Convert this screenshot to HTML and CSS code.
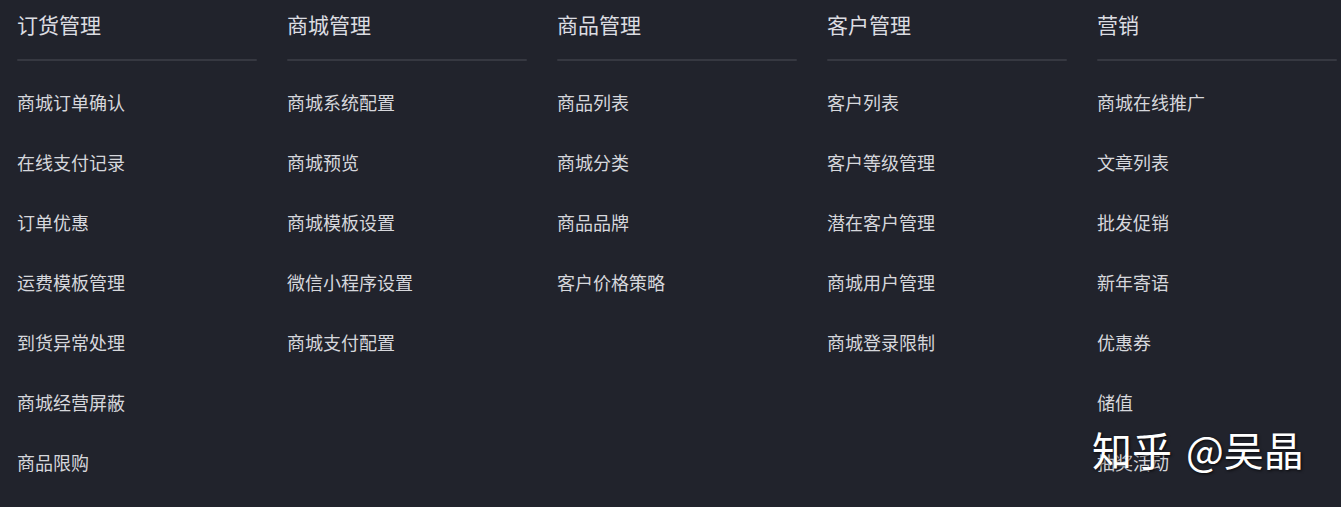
FILE: index.html
```html
<!DOCTYPE html>
<html lang="zh-CN">
<head>
<meta charset="utf-8">
<link rel="stylesheet" href="styles.css">
</head>
<body>
<div class="menu">
  <div class="col">
    <div class="title">订货管理</div>
    <div class="rule"></div>
    <ul class="items">
      <li>商城订单确认</li>
      <li>在线支付记录</li>
      <li>订单优惠</li>
      <li>运费模板管理</li>
      <li>到货异常处理</li>
      <li>商城经营屏蔽</li>
      <li>商品限购</li>
    </ul>
  </div>
  <div class="col">
    <div class="title">商城管理</div>
    <div class="rule"></div>
    <ul class="items">
      <li>商城系统配置</li>
      <li>商城预览</li>
      <li>商城模板设置</li>
      <li>微信小程序设置</li>
      <li>商城支付配置</li>
    </ul>
  </div>
  <div class="col">
    <div class="title">商品管理</div>
    <div class="rule"></div>
    <ul class="items">
      <li>商品列表</li>
      <li>商城分类</li>
      <li>商品品牌</li>
      <li>客户价格策略</li>
    </ul>
  </div>
  <div class="col">
    <div class="title">客户管理</div>
    <div class="rule"></div>
    <ul class="items">
      <li>客户列表</li>
      <li>客户等级管理</li>
      <li>潜在客户管理</li>
      <li>商城用户管理</li>
      <li>商城登录限制</li>
    </ul>
  </div>
  <div class="col">
    <div class="title">营销</div>
    <div class="rule"></div>
    <ul class="items">
      <li>商城在线推广</li>
      <li>文章列表</li>
      <li>批发促销</li>
      <li>新年寄语</li>
      <li>优惠券</li>
      <li>储值</li>
      <li>抽奖活动</li>
    </ul>
  </div>
</div>
<div class="watermark">知乎 @吴晶</div>
</body>
</html>
```
FILE: styles.css
```css
html, body {
  margin: 0;
  padding: 0;
  background: #21232c;
  height: 100%;
  overflow: hidden;
}
body {
  position: relative;
  font-family: "Noto Sans CJK SC", "Noto Sans", sans-serif;
  color: #d6d7dc;
}
.menu {
  display: flex;
  gap: 30px;
  padding-left: 17px;
}
.col {
  width: 240px;
}
.title {
  font-size: 21px;
  line-height: 48px;
  color: #dcdde2;
}
.rule {
  height: 2px;
  margin-top: 11px;
  background: #363841;
  border-radius: 1px;
}
.items {
  list-style: none;
  margin: 11px 0 0;
  padding: 0;
}
.items li {
  font-size: 18px;
  line-height: 60px;
  height: 60px;
}
.watermark {
  position: absolute;
  left: 1092px;
  top: 421px;
  font-size: 40px;
  line-height: 56px;
  word-spacing: 5px;
  color: #ffffff;
  text-shadow: 1px 1px 3px rgba(0,0,0,0.8);
  white-space: nowrap;
}
```
